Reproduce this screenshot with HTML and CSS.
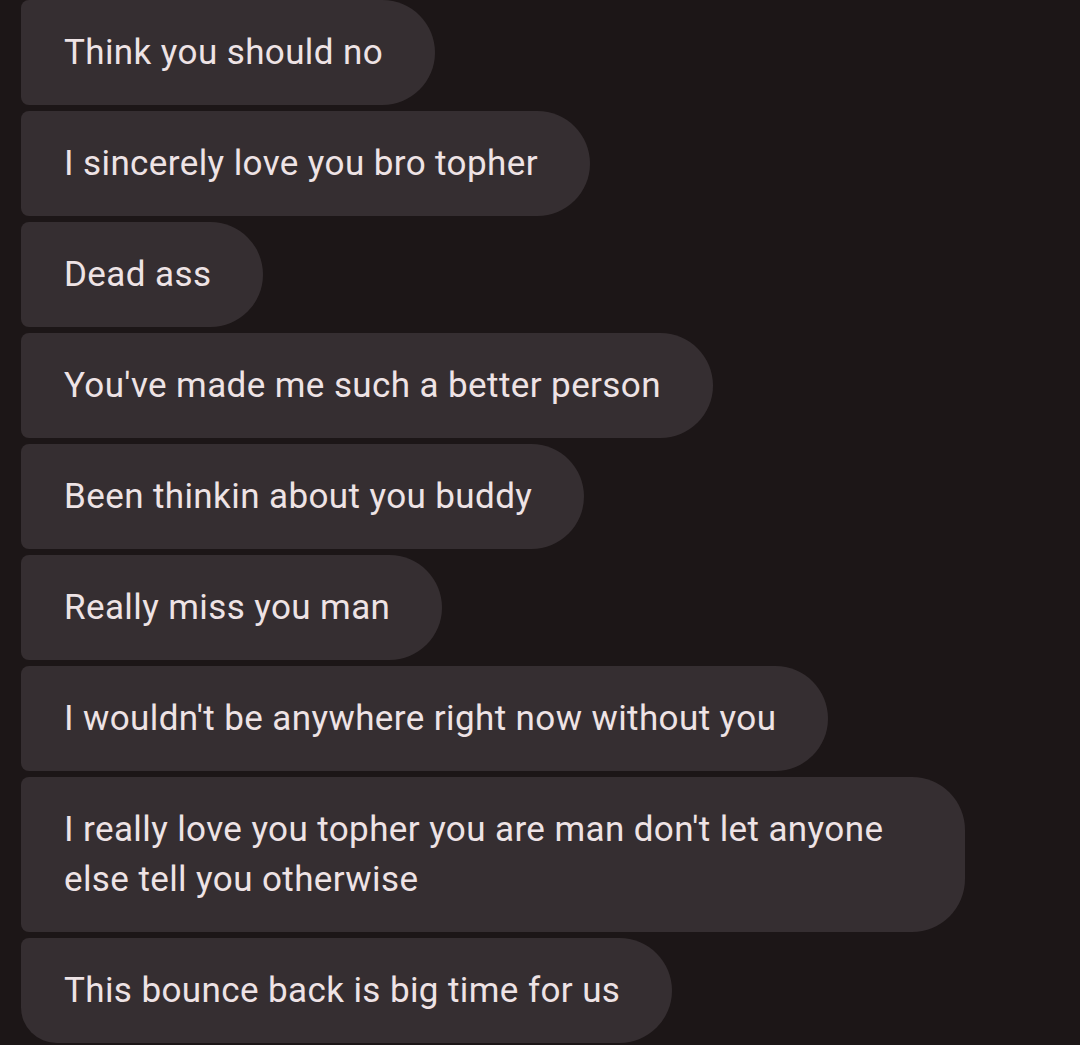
FILE: index.html
```html
<!DOCTYPE html>
<html lang="en">
<head>
    <meta charset="UTF-8">
    <meta name="viewport" content="width=device-width, initial-scale=1.0">
    <title>Messages</title>
    <link rel="stylesheet" href="styles.css">
</head>
<body>
    <!-- Incoming message group -->
    <div class="thread">
        <div class="bubble">Think you should no</div>
        <div class="bubble">I sincerely love you bro topher</div>
        <div class="bubble">Dead ass</div>
        <div class="bubble">You've made me such a better person</div>
        <div class="bubble">Been thinkin about you buddy</div>
        <div class="bubble">Really miss you man</div>
        <div class="bubble">I wouldn't be anywhere right now without you</div>
        <div class="bubble">I really love you topher you are man don't let anyone else tell you otherwise</div>
        <div class="bubble last">This bounce back is big time for us</div>
    </div>
</body>
</html>
```

FILE: styles.css
```css
/* Page */
body {
    margin: 0;
    background-color: #1c1617;
    font-family: Roboto, "Noto Sans", sans-serif;
    color: #eee3e5;
}

/* Column of bubbles */
.thread {
    display: flex;
    flex-direction: column;
    align-items: flex-start;
    gap: 6px;
    padding: 0 0 0 21px;
}

/* Single incoming bubble */
.bubble {
    box-sizing: border-box;
    max-width: 944px;
    padding: 27.5px 52px 27.5px 43px;
    background-color: #352e31;
    border-radius: 8px 53px 53px 8px;
    font-size: 35px;
    line-height: 50px;
    letter-spacing: 0.4px;
}

/* Last bubble in the group gets the round bottom corner */
.bubble.last {
    border-bottom-left-radius: 36px;
}
```
